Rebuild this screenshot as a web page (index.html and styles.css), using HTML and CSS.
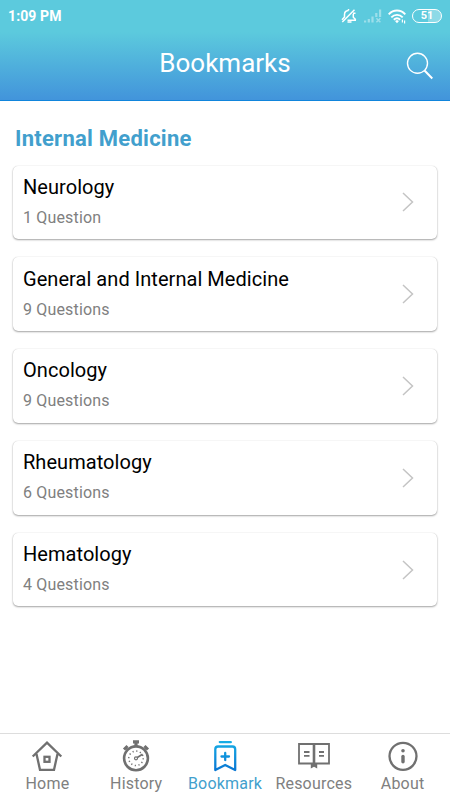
FILE: index.html
```html
<!DOCTYPE html>
<html lang="en">
<head>
  <meta charset="UTF-8" />
  <meta name="viewport" content="width=device-width, initial-scale=1.0" />
  <title>Bookmarks</title>
  <link rel="stylesheet" href="styles.css">
</head>
<body>
  <header>
    <div class="status-bar">
      <span class="time">1:09 PM</span>
      <div class="status-icons">
        <svg class="mute" width="16" height="16" viewBox="0 0 16 16" fill="none" stroke="#fff" stroke-width="1.500">
          <path d="M1 11.800L3.500 9V6.500C3.500 4.200 5.200 2.800 7.500 2.600M7.500 1V2.600M12.300 6V9.300L14.800 11.800M15 12.200H6.500M6.500 14H10.500M1.300 14L13.500 1.800M12 5.300H14.500" />
        </svg>
        <svg class="signal" width="18" height="14" viewBox="0 0 18 14">
          <path fill="#fff" d="M0 11.500h2.200v2H0zM3.700 10h2.200v3.500H3.700zM7.400 7.500h2.200v6H7.400zM11.200 4h2.200v4h-2.200zM15 .500h2.200V8H15z" />
          <path stroke="#fff" stroke-width="1.500" d="M12.400 9.300l4 4M16.400 9.300l-4 4" />
        </svg>
        <svg class="wifi" width="18" height="15" viewBox="0 0 18 15" fill="none" stroke="#fff">
          <path stroke-width="1.900" d="M.700 5.300C5.500.300 12.500.300 17.300 5.300M3.300 8.300C6.500 5 11.500 5 14.700 8.300M5.800 10.800C7.700 9 10.300 9 12.200 10.800" />
          <path fill="#fff" stroke="none" d="M7 12L9 11L11 12L9 14.200zM13.800 13.500v-3h1.200v3zM16 11.500h1.200v3H16z" />
        </svg>
        <span class="battery">51</span>
      </div>
    </div>
    <div class="title-bar">
      <h1>Bookmarks</h1>
      <svg class="search" width="28" height="28" viewBox="0 0 28 28" fill="none" stroke="#fff">
        <circle cx="11.500" cy="11.300" r="10" stroke-width="1.400" />
        <path stroke-width="2" d="M18.500 18.500L26.300 26.500" />
      </svg>
    </div>
  </header>

  <main>
    <h2>Internal Medicine</h2>
    <div class="list">
      <a class="card">
        <div class="label">Neurology<span>1 Question</span></div>
        <svg class="arrow" width="12" height="20" viewBox="0 0 12 20"><path d="M1 1L10.500 10L1 19" /></svg>
      </a>
      <a class="card">
        <div class="label">General and Internal Medicine<span>9 Questions</span></div>
        <svg class="arrow" width="12" height="20" viewBox="0 0 12 20"><path d="M1 1L10.500 10L1 19" /></svg>
      </a>
      <a class="card">
        <div class="label">Oncology<span>9 Questions</span></div>
        <svg class="arrow" width="12" height="20" viewBox="0 0 12 20"><path d="M1 1L10.500 10L1 19" /></svg>
      </a>
      <a class="card">
        <div class="label">Rheumatology<span>6 Questions</span></div>
        <svg class="arrow" width="12" height="20" viewBox="0 0 12 20"><path d="M1 1L10.500 10L1 19" /></svg>
      </a>
      <a class="card">
        <div class="label">Hematology<span>4 Questions</span></div>
        <svg class="arrow" width="12" height="20" viewBox="0 0 12 20"><path d="M1 1L10.500 10L1 19" /></svg>
      </a>
    </div>
  </main>

  <nav>
    <a>
      <svg width="32" height="32" viewBox="0 0 32 32" fill="none" stroke="#707070" stroke-width="2.300">
        <path d="M1.700 16.500L16 2.600L30.300 16.500M5.500 14L9 29.800H23L26.500 14" />
        <rect x="13.500" y="16.800" width="5" height="5" />
      </svg>
      Home
    </a>
    <a>
      <svg width="32" height="32" viewBox="0 0 32 32" fill="none" stroke="#707070">
        <circle cx="16" cy="18.300" r="11.900" stroke-width="2.600" />
        <path stroke-width="3.200" d="M13 1.900H19M16 2V6.500" />
        <path stroke-width="3" d="M4 9.500L7.500 6M24.500 6L28 9.500" />
        <path stroke-width="1.500" d="M5.500 7.500L8 10M26.500 7.500L24 10" />
        <circle cx="16" cy="18.300" r="7.200" stroke-width="1.500" stroke-dasharray="1.200 2.570" />
        <circle cx="16" cy="18.300" r="1.500" stroke-width="1.200" />
        <path stroke-width="1.700" d="M17.300 17.400L22.500 14.300" />
      </svg>
      History
    </a>
    <a class="active">
      <svg width="32" height="32" viewBox="0 0 32 32" fill="none" stroke="url(#blue)" stroke-width="2.300">
        <defs>
          <linearGradient id="blue" gradientUnits="userSpaceOnUse" x1="0" y1="0" x2="0" y2="32">
            <stop offset="0" stop-color="#18b0e6" />
            <stop offset="1" stop-color="#0874d2" />
          </linearGradient>
        </defs>
        <path stroke-linecap="round" stroke-linejoin="round" d="M10.800 2.100H21.800L21.800 2.200M6.300 30V9.200Q6.300 6.500 9 6.500H23.500Q26.200 6.500 26.200 9.200V30L16.200 25ZM12.500 16.500H20L20 16.600M16.200 13V20L16.300 20" />
      </svg>
      Bookmark
    </a>
    <a>
      <svg width="32" height="32" viewBox="0 0 32 32" fill="none" stroke="#707070" stroke-width="1.800">
        <path d="M1 4H31V23.500H1Z" />
        <path stroke-width="2.600" d="M16 4V25" />
        <path d="M6 12H11.500M6 15.800H11.500M21 12H26M21 15.800H26" />
        <path fill="#707070" stroke="none" d="M12.800 23H19.200V28.500L16 26.700L12.800 28.500Z" />
      </svg>
      Resources
    </a>
    <a>
      <svg width="32" height="32" viewBox="0 0 32 32" fill="none" stroke="#707070">
        <circle cx="16" cy="16.300" r="13.500" stroke-width="2.300" />
        <circle cx="16" cy="10.800" r="1.800" fill="#707070" stroke="none" />
        <path stroke-width="3.400" stroke-linecap="round" d="M16 16.500V21.700" />
      </svg>
      About
    </a>
  </nav>
</body>
</html>
```
FILE: styles.css
```css
* {
  box-sizing: border-box;
}

body {
  margin: 0;
  height: 800px;
  display: flex;
  flex-direction: column;
  font-family: Roboto, sans-serif;
  background-color: #fff;
  color: #000;
  overflow: hidden;
}

header {
  height: 101px;
  background: linear-gradient(#5ccadd 0, #5ccadd 32px, #4294db 100px);
  border-bottom: 1px solid #1185dc;
  color: #fff;
}

.status-bar {
  height: 32px;
  display: flex;
  align-items: center;
  justify-content: space-between;
  padding: 0 8px;
}

.time {
  font-size: 14px;
  font-weight: bold;
  letter-spacing: 0.1px;
}

.status-icons {
  display: flex;
  align-items: center;
}

.mute {
  margin-right: 1px;
}

.signal {
  margin-left: 6px;
  opacity: 0.4;
}

.wifi {
  margin-left: 6px;
}

.battery {
  width: 30px;
  height: 14px;
  margin-left: 6px;
  border: 1.5px solid #fff;
  border-radius: 7px;
  background: linear-gradient(90deg, transparent 53%, rgba(255, 255, 255, 0.3) 53%);
  font-size: 11px;
  font-weight: bold;
  line-height: 12px;
  text-align: center;
}

.title-bar {
  height: 68px;
  display: flex;
  align-items: center;
  justify-content: flex-end;
  padding: 0 16px 0 44px;
}

h1 {
  flex: 1;
  margin: 0 0 6px;
  font-size: 26px;
  font-weight: normal;
  text-align: center;
}

main {
  flex: 1;
  padding: 24px 13px 0;
}

h2 {
  margin: 0 2px 13.5px;
  color: #429fcd;
  font-size: 22px;
  line-height: 27px;
  letter-spacing: 0.25px;
}

.list {
  display: flex;
  flex-direction: column;
  gap: 18px;
}

.card {
  height: 73.8px;
  display: flex;
  align-items: center;
  justify-content: space-between;
  padding: 0 23px 0 10px;
  border-radius: 5px;
  box-shadow: 0 1px 2px rgba(0, 0, 0, 0.35), 0 0 1px rgba(0, 0, 0, 0.2);
}

.label {
  padding-bottom: 1.4px;
  font-size: 20px;
  line-height: 26px;
  letter-spacing: 0.05px;
}

.label span {
  display: block;
  margin-top: 6px;
  color: #808080;
  font-size: 16px;
  line-height: 24px;
  letter-spacing: 0.17px;
}

.arrow {
  fill: none;
  stroke: #c4c4c4;
  stroke-width: 1.5;
}

nav {
  height: 67px;
  display: flex;
  padding: 6px 3px 0;
  border-top: 1px solid #ddd;
}

nav a {
  flex: 1;
  display: flex;
  flex-direction: column;
  align-items: center;
  color: #808080;
  font-size: 16px;
  line-height: 24px;
  letter-spacing: 0.2px;
}

nav a.active {
  color: #429fcd;
}
```
